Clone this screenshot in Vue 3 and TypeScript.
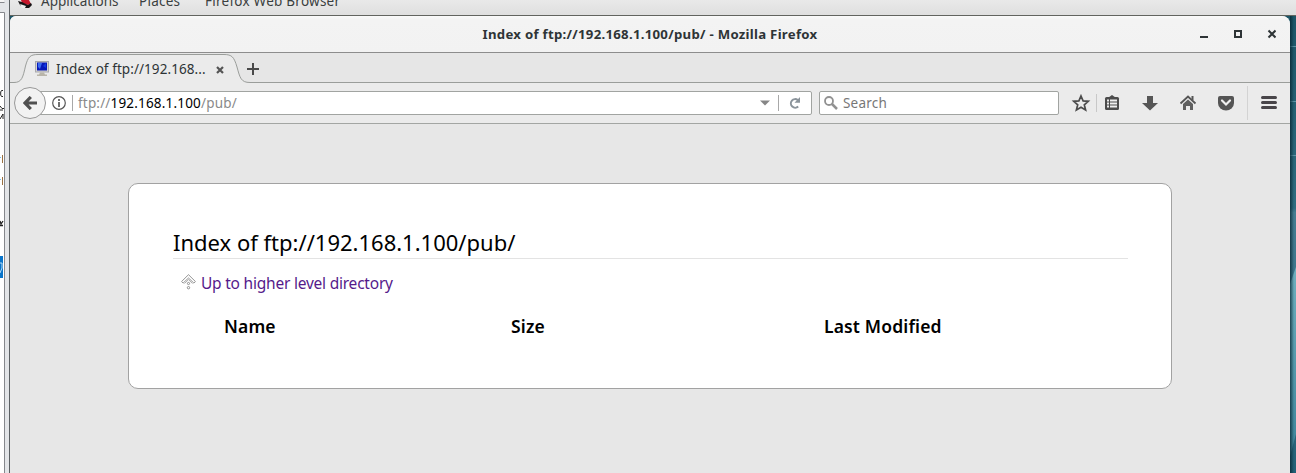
<script setup lang="ts">
const menus: string[] = ['Applications', 'Places', 'Firefox Web Browser']
const columns: string[] = ['Name', 'Size', 'Last Modified']
const host = '192.168.1.100'
</script>

<template>
  <div class="screen">
    <aside class="behind">
      <svg width="10" height="473" viewBox="0 0 10 473">
        <rect width="10" height="473" fill="#e3e5e8" />
        <rect y="13" width="4" height="460" fill="#fff" />
        <rect y="0" width="4" height="3" fill="#f4f4f4" />
        <path d="M0 2.500H4.500M0 12.500H4.500V473" fill="none" stroke="#85878c" />
        <path d="M3 90.500H1.500L.7 92V95L1.500 96.500H3M0 106l2 2.500h2M0 110h3M0 119l3-5v5" fill="none" stroke="#222" />
        <path d="M0 157.500h1M0 179.500h1" stroke="#79bde5" />
        <path d="M2.500 155v8M2.500 177v8" stroke="#9b7141" />
        <path d="M0 221l1 3 2-3M0 225.500h3" fill="none" stroke="#222" stroke-width="1.300" />
        <rect y="256" width="3" height="22" fill="#0874ca" />
        <path d="M0 263h2v5l-2 5" fill="none" stroke="#b9dcf5" />
        <rect x="9" width="1" height="473" fill="#5b6063" />
      </svg>
    </aside>
    <div class="desktop">
      <header class="panel">
        <svg class="hat" width="16" height="8" viewBox="0 0 16 8">
          <path d="M3 0h8l2 4-3 1-6-2z" fill="#c5162b" />
          <path d="M0 1l4 1 6 3 3-2 1 2-3 3H7L2 5z" fill="#171416" />
          <path d="M2 4l6 2-1 2H4z" fill="#eee" />
        </svg>
        <span v-for="(m, i) in menus" :key="m" :class="['menu', 'm' + i]">{{ m }}</span>
      </header>
      <div class="stage">
        <svg class="wallpaper" width="16" height="457" viewBox="0 0 16 457">
          <defs>
            <linearGradient id="sea" x1="0" y1="0" x2="0" y2="1">
              <stop offset="0" stop-color="#1d5567" />
              <stop offset=".42" stop-color="#2f6c80" />
              <stop offset=".43" stop-color="#457c91" />
              <stop offset="1" stop-color="#236177" />
            </linearGradient>
            <linearGradient id="glow" x1="0" y1="0" x2="0" y2="1">
              <stop offset="0" stop-color="#6fafbe" />
              <stop offset="1" stop-color="#3d8399" />
            </linearGradient>
            <linearGradient id="shade">
              <stop offset="0" stop-color="#06232e" stop-opacity=".75" />
              <stop offset="1" stop-color="#06232e" stop-opacity="0" />
            </linearGradient>
          </defs>
          <rect width="16" height="457" fill="url(#sea)" />
          <path d="M16 251L10 268V440L16 418Z" fill="url(#glow)" />
          <path d="M10 30.500h6M10 85.500h6M10 139.500h6" stroke="#5c92a4" />
          <rect x="10" width="4" height="457" fill="url(#shade)" />
        </svg>
        <main class="window">
          <div class="titlebar">
            <h1><span>Index of ftp://{{ host }}/pub/ - Mozilla Firefox</span></h1>
            <svg class="controls" width="76" height="12" viewBox="0 0 76 12">
              <rect x="0" y="8" width="8" height="2" fill="#2e3436" />
              <rect x="35" y="3" width="6" height="6" fill="none" stroke="#2e3436" stroke-width="2" />
              <path d="M68.500 2.500l7 7M75.500 2.500l-7 7" stroke="#2e3436" stroke-width="2" />
            </svg>
          </div>
          <div class="tabs">
            <svg class="tabshape" width="1280" height="30" viewBox="0 0 1280 30">
              <path d="M0 29.500H4C12 29.500 13 24 15.500 13C18 4 20 1.500 28 1.500H214C222 1.500 224 4 227 14C230 25 231 29.500 240 29.500V30H0Z" fill="#ebebeb" />
              <path d="M0 29.500H4C12 29.500 13 24 15.500 13C18 4 20 1.500 28 1.500H214C222 1.500 224 4 227 14C230 25 231 29.500 240 29.500H1280" fill="none" stroke="#9a9d9a" />
            </svg>
            <div class="tabrow">
              <svg class="monitor" width="14" height="16" viewBox="0 0 14 16">
                <rect x=".5" y=".5" width="13" height="10.500" fill="#d5d4cf" stroke="#a9a9ad" />
                <rect x="2" y="1.500" width="10" height="8" fill="#0818b8" />
                <path d="M3 2h4L5 8 3 6z" fill="#3d6cf0" /><path d="M8 5l3-3v5z" fill="#1239e0" />
                <path d="M5 11.500h4l1 2h2V15H2v-1.500h2z" fill="#b9b5a9" />
              </svg>
              <span class="tabtitle">Index of ftp://192.168...</span>
              <svg class="tabclose" width="8" height="8" viewBox="0 0 8 8"><path d="M1 1l6 6M7 1L1 7" stroke="#555" stroke-width="2.200" /></svg>
              <svg class="plus" width="12" height="12" viewBox="0 0 12 12"><path d="M6 0v12M0 6h12" stroke="#4a4a4a" stroke-width="2" /></svg>
            </div>
          </div>
          <nav class="nav">
            <button class="back">
              <svg width="14" height="14" viewBox="0 0 14 14"><path d="M7.800 1L2 7l5.800 6M2.500 7H14" fill="none" stroke="#505050" stroke-width="3.200" /></svg>
            </button>
            <div class="url">
              <svg class="info" width="14" height="14" viewBox="0 0 14 14">
                <circle cx="7" cy="7" r="6.300" fill="none" stroke="#555" stroke-width="1.200" />
                <path d="M7 3v2M7 6v5" stroke="#555" stroke-width="1.700" />
              </svg>
              <i class="bar"></i>
              <span class="address">ftp://<b>{{ host }}</b>/pub/</span>
              <svg class="drop" width="10" height="6" viewBox="0 0 10 6"><path d="M0 .5h10L5 5.500z" fill="#868686" /></svg>
              <i class="bar right"></i>
              <svg class="reload" width="12" height="12" viewBox="0 0 12 12">
                <path d="M8.800 3A4.300 4.300 0 1 0 9.200 9.500" fill="none" stroke="#8b949b" stroke-width="2" />
                <path d="M11 0v5.800H5.500z" fill="#8b949b" />
              </svg>
            </div>
            <div class="search">
              <svg width="14" height="14" viewBox="0 0 14 14"><circle cx="5" cy="5" r="4" fill="none" stroke="#929292" stroke-width="1.800" /><path d="M8 8l5 5" stroke="#929292" stroke-width="2.500" /></svg>
              <span>Search</span>
            </div>
            <svg class="tools" width="218" height="40" viewBox="0 0 218 40">
              <path d="M12 13l2.100 4.900 5.200.4-4 3.500 1.300 5.200L12 24.200 7.400 27l1.300-5.200-4-3.500 5.200-.4z" fill="none" stroke="#4c4c4c" stroke-width="1.700" />
              <path d="M27.500 11v18" stroke="#c8c8c8" />
              <rect x="36" y="14" width="14" height="13" rx="1.500" fill="#4c4c4c" />
              <path d="M39.500 14.500L43 12l3.500 2.500z" fill="#4c4c4c" />
              <path d="M38 17.500h2M38 20.500h2M38 23.500h2M41 17.500h7M41 20.500h7M41 23.500h7" stroke="#eee" stroke-width="1.800" />
              <path d="M78 13h6v7h5l-8 7.500-8-7.500h5z" fill="#565656" />
              <path d="M111.500 20.500L119 13.500l7.500 7" fill="none" stroke="#565656" stroke-width="1.800" />
              <path d="M114 21l5-4.500 5 4.500v6H121v-4h-4v4h-3z" fill="#606060" /><rect x="122.500" y="13" width="2" height="4" fill="#565656" />
              <path d="M151 13h12q2 0 2 2v5a8 7.500 0 0 1-16 0v-5q0-2 2-2z" fill="#555" />
              <path d="M153 17.500l4 4 4-4" fill="none" stroke="#f0f0f0" stroke-width="2.200" stroke-linecap="round" />
              <path d="M178.500 3v34" stroke="#d3d3d3" />
              <path d="M193.500 14.500h13M193.500 19.500h13M193.500 24.500h13" stroke="#484549" stroke-width="3" stroke-linecap="round" />
            </svg>
          </nav>
          <section class="content">
            <article class="listing">
              <h2><span>Index of ftp://{{ host }}/pub/</span></h2>
              <p class="up">
                <svg width="15" height="16" viewBox="0 0 15 16">
                  <path d="M7.500 .7L.6 7.500l1.500 1.600L7.500 4l5.400 5.100 1.500-1.600z" fill="#fff" stroke="#888" stroke-width=".9" />
                  <path d="M3.500 9.500L7.500 5.600l4 3.900" fill="none" stroke="#999" stroke-width=".8" />
                  <circle cx="7.500" cy="9.500" r="1.100" fill="#fff" stroke="#858585" stroke-width=".9" />
                  <circle cx="7.500" cy="13.700" r="1.200" fill="#fff" stroke="#858585" stroke-width=".9" />
                </svg>
                <a>Up to higher level directory</a>
              </p>
              <div class="heads"><strong v-for="c in columns" :key="c">{{ c }}</strong></div>
            </article>
          </section>
        </main>
      </div>
    </div>
  </div>
</template>

<style>
body { overflow: hidden; }
</style>
<style scoped>
* { box-sizing: border-box; }
.screen { width: 1296px; height: 473px; display: flex; overflow: hidden; font-family: "Noto Sans", "Open Sans", sans-serif; font-size: 13.5px; color: #2e3436; }
svg { display: block; flex: none; }
.behind { width: 10px; flex: none; }
.desktop { width: 1286px; }
.panel { height: 16px; display: flex; background: linear-gradient(#e9e9e9, #dfdfdf); border-bottom: 1px solid #62645f; overflow: hidden; }
.hat { margin-left: 8px; }
.menu { line-height: 18px; height: 18px; margin-top: -8px; white-space: nowrap; color: #3b3f40; letter-spacing: .1px; }
.m0 { margin-left: 7px; width: 98px; letter-spacing: 0; }
.m1 { width: 66px; letter-spacing: .25px; }
.m2 { letter-spacing: .25px; }
.stage { position: relative; height: 457px; background: #1d5567; }
.wallpaper { position: absolute; right: 0; top: 0; }
.window { position: relative; width: 1280px; height: 457px; border-radius: 6px 8px 0 0; overflow: hidden; background: #e8e8e8; }
.titlebar { height: 37px; background: linear-gradient(#fafafa, #f3f3f3 4px, #f2f2f2); border-bottom: 1px solid #8d8d8d; display: flex; align-items: center; padding-left: 76px; }
.titlebar h1 { flex: 1; margin: 0; font-size: 13.2px; line-height: 20px; text-align: center; font-weight: 700; white-space: nowrap; padding-left: 14px; letter-spacing: .28px; }
.controls { margin-right: 14px; }
.tabs { height: 30px; position: relative; background: #e6e6e6; }
.tabshape { position: absolute; left: 0; top: 0; }
.tabrow { position: relative; height: 30px; display: flex; align-items: center; padding: 2px 0 0 25px; }
.tabtitle { width: 160px; margin-left: 7px; white-space: nowrap; letter-spacing: .07px; }
.tabclose { margin-top: 1px; }
.plus { margin-left: 23px; }
.nav { height: 41px; display: flex; align-items: center; background: #ebebeb; border-bottom: 1px solid #a3a6a3; padding-left: 4px; }
.back { position: relative; z-index: 1; width: 32px; height: 32px; border-radius: 50%; border: 1px solid #989898; background: #f2f2f2; padding: 0; display: flex; align-items: center; justify-content: center; flex: none; }
.url { width: 782px; height: 24px; margin-left: -16px; border: 1px solid #a1a4a1; border-radius: 2px; background: #fff; display: flex; align-items: center; padding-left: 21px; flex: none; }
.bar { width: 1px; height: 16px; margin-left: 6px; background: #a8a8a8; }
.address { width: 682px; margin-left: 5px; color: #8a8a8a; white-space: nowrap; letter-spacing: .18px; }
.address b { font-weight: 400; color: #000; }
.bar.right { margin-left: 8px; }
.reload { margin-left: 10px; }
.search { width: 240px; height: 24px; margin-left: 7px; border: 1px solid #a1a4a1; border-radius: 2px; background: #fff; display: flex; align-items: center; padding-left: 4px; color: #777; flex: none; }
.search span { margin-left: 5px; letter-spacing: .2px; }
.tools { margin-left: 10px; }
.content { height: 349px; padding: 59px 0 0 118px; background: #e7e7e7; }
.listing { width: 1044px; height: 206px; border: 1px solid #a2a2a2; border-radius: 10px; background: #fff; padding: 42px 43px 0 44px; color: #000; }
h2 { height: 33px; margin: 0; border-bottom: 1px solid #e3e3e3; font-size: 22px; line-height: 32px; font-weight: 400; white-space: nowrap; }
.up { height: 20px; margin: 15px 0 0 8px; display: flex; font-size: 15.5px; line-height: 18px; }
.up a { margin-left: 5px; color: #551a8b; letter-spacing: -.22px; }
.heads { display: grid; grid-template-columns: 287px 313px 1fr; margin: 20px 0 0 51px; font-size: 17.5px; line-height: 24px; }
.heads strong { font-weight: 600; letter-spacing: .15px; }
</style>
